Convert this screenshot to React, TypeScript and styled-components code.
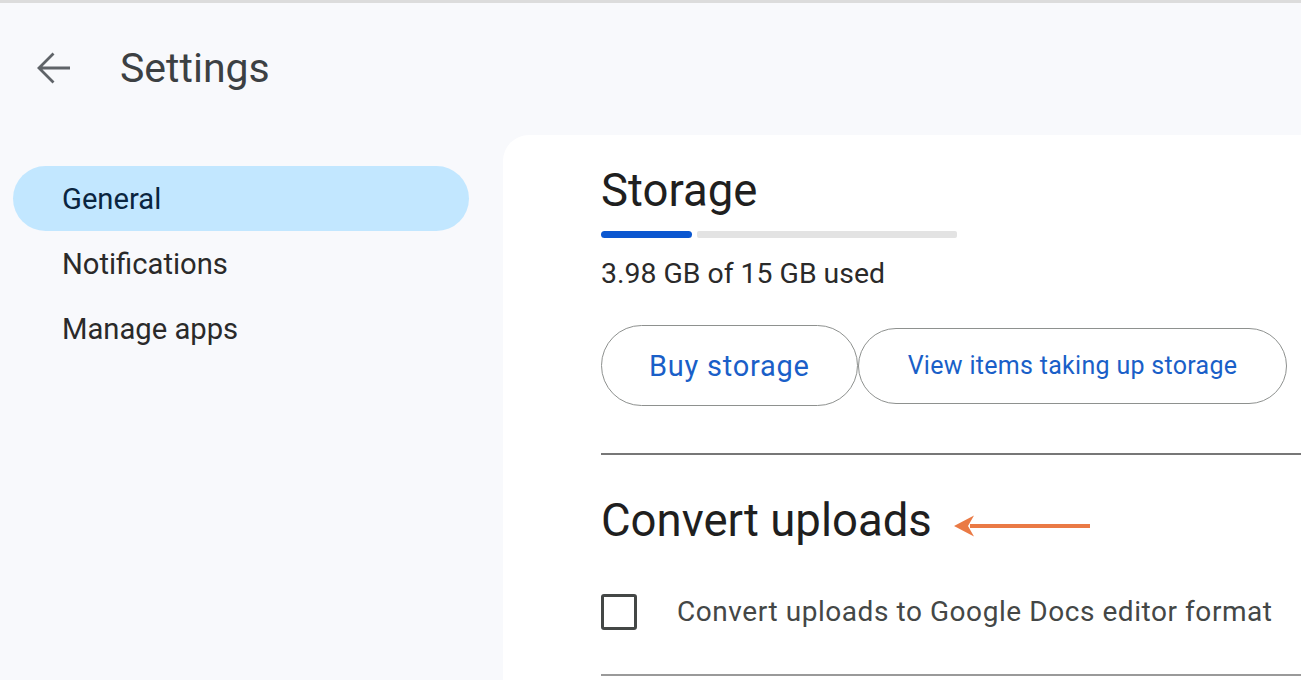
import React from 'react'
import styled, { createGlobalStyle } from 'styled-components'

const GlobalStyle = createGlobalStyle`
  html, body {
    margin: 0;
    padding: 0;
    background: #f8f9fc;
    font-family: Roboto, "Noto Sans", sans-serif;
    overflow: hidden;
  }
`

const Page = styled.div`
  width: 1301px;
  height: 680px;
  border-top: 3px solid #dcdcdc;
  box-sizing: border-box;
  background: #f8f9fc;
  display: flex;
  flex-direction: column;
  overflow: hidden;
`

const Header = styled.header`
  height: 132px;
  display: flex;
  align-items: center;
  padding-left: 36px;
  gap: 48px;
  box-sizing: border-box;
  padding-bottom: 2px;
`

const BackButton = styled.button`
  background: none;
  border: none;
  padding: 0;
  width: 36px;
  height: 36px;
  display: flex;
  align-items: center;
  justify-content: center;
  color: #5f6368;
  cursor: pointer;
`

const Title = styled.h1`
  margin: 0;
  font-size: 41px;
  font-weight: 400;
  color: #3c4043;
  line-height: 48px;
`

const Body = styled.div`
  flex: 1;
  display: flex;
`

const Sidebar = styled.nav`
  width: 503px;
  padding: 31px 0 0 13px;
  box-sizing: border-box;
  display: flex;
  flex-direction: column;
`

const NavItem = styled.div<{ $active?: boolean }>`
  width: 456px;
  height: 65px;
  border-radius: 33px;
  display: flex;
  align-items: center;
  padding-left: 49px;
  box-sizing: border-box;
  font-size: 29.2px;
  color: ${p => (p.$active ? '#0a2540' : '#2a2a2a')};
  background: ${p => (p.$active ? '#c2e7ff' : 'transparent')};
`

const Card = styled.main`
  flex: 1;
  background: #fff;
  border-top-left-radius: 26px;
  padding: 30px 0 0 98px;
  box-sizing: border-box;
`

const SectionTitle = styled.h2`
  margin: 0;
  height: 52px;
  font-size: 45.5px;
  font-weight: 400;
  color: #1f1f1f;
  line-height: 52px;
  display: flex;
  align-items: center;
  gap: 22px;
`

const Meter = styled.div`
  margin-top: 14px;
  width: 356px;
  height: 7px;
  display: flex;
  gap: 5px;
`

const MeterFill = styled.div`
  height: 100%;
  border-radius: 4px;
  background: #0b57d0;
`

const MeterRest = styled.div`
  flex: 1;
  height: 100%;
  border-radius: 2px;
  background: #e3e3e3;
`

const UsageText = styled.div`
  margin-top: 20px;
  font-size: 28.4px;
  line-height: 32px;
  color: #2a2a2a;
`

const ButtonRow = styled.div`
  margin-top: 35px;
  height: 81px;
  display: flex;
  align-items: center;
`

const PillButton = styled.button<{ $large?: boolean }>`
  height: ${p => (p.$large ? 81 : 76)}px;
  padding: 0 ${p => (p.$large ? 47 : 49)}px;
  border: 1.5px solid #8e918f;
  border-radius: 41px;
  background: #fff;
  color: #1a5fc8;
  font-family: Roboto, sans-serif;
  font-size: ${p => (p.$large ? 29 : 25)}px;
  letter-spacing: ${p => (p.$large ? 0.75 : 0.3)}px;
  font-weight: 400;
  cursor: pointer;
`

const Divider = styled.hr`
  margin: 47px 0 0 0;
  height: 0;
  border: none;
  border-top: 2px solid #777;
`

const ConvertTitle = styled(SectionTitle)`
  margin-top: 40px;
`

const ArrowMark = styled.svg`
  margin-top: 10px;
`

const CheckRow = styled.label`
  margin-top: 47px;
  height: 36px;
  display: flex;
  align-items: center;
  gap: 40px;
  font-size: 28px;
  letter-spacing: 0.56px;
  line-height: 36px;
  color: #444746;
`

const Box = styled.span`
  width: 36px;
  height: 36px;
  border: 3px solid #444746;
  border-radius: 3px;
  box-sizing: border-box;
`

const BottomDivider = styled(Divider)`
  margin-top: 44px;
  border-top: 2px solid #9a9a9a;
`

const Arrow = () => (
  <ArrowMark width="138" height="22" viewBox="0 0 138 22">
    <path d="M136 11H16" stroke="#ea7a45" strokeWidth="4" />
    <path d="M0 11L20 0.5L14 11L20 21.5Z" fill="#ea7a45" />
  </ArrowMark>
)

const used = 3.98
const total = 15

const App = () => (
  <>
    <GlobalStyle />
    <Page>
      <Header>
        <BackButton aria-label="Back">
          <svg width="36" height="36" viewBox="0 0 36 36">
            <path
              d="M34 18H3M17.5 3.5L3 18L17.5 32.5"
              fill="none"
              stroke="currentColor"
              strokeWidth="2.8"
            />
          </svg>
        </BackButton>
        <Title>Settings</Title>
      </Header>
      <Body>
        <Sidebar>
          <NavItem $active>General</NavItem>
          <NavItem>Notifications</NavItem>
          <NavItem>Manage apps</NavItem>
        </Sidebar>
        <Card>
          <SectionTitle>Storage</SectionTitle>
          <Meter>
            <MeterFill style={{ width: `${(used / total) * 100 - 1}%` }} />
            <MeterRest />
          </Meter>
          <UsageText>{used} GB of {total} GB used</UsageText>
          <ButtonRow>
            <PillButton $large>Buy storage</PillButton>
            <PillButton>View items taking up storage</PillButton>
          </ButtonRow>
          <Divider />
          <ConvertTitle>
            Convert uploads
            <Arrow />
          </ConvertTitle>
          <CheckRow>
            <Box />
            Convert uploads to Google Docs editor format
          </CheckRow>
          <BottomDivider />
        </Card>
      </Body>
    </Page>
  </>
)

export default App
